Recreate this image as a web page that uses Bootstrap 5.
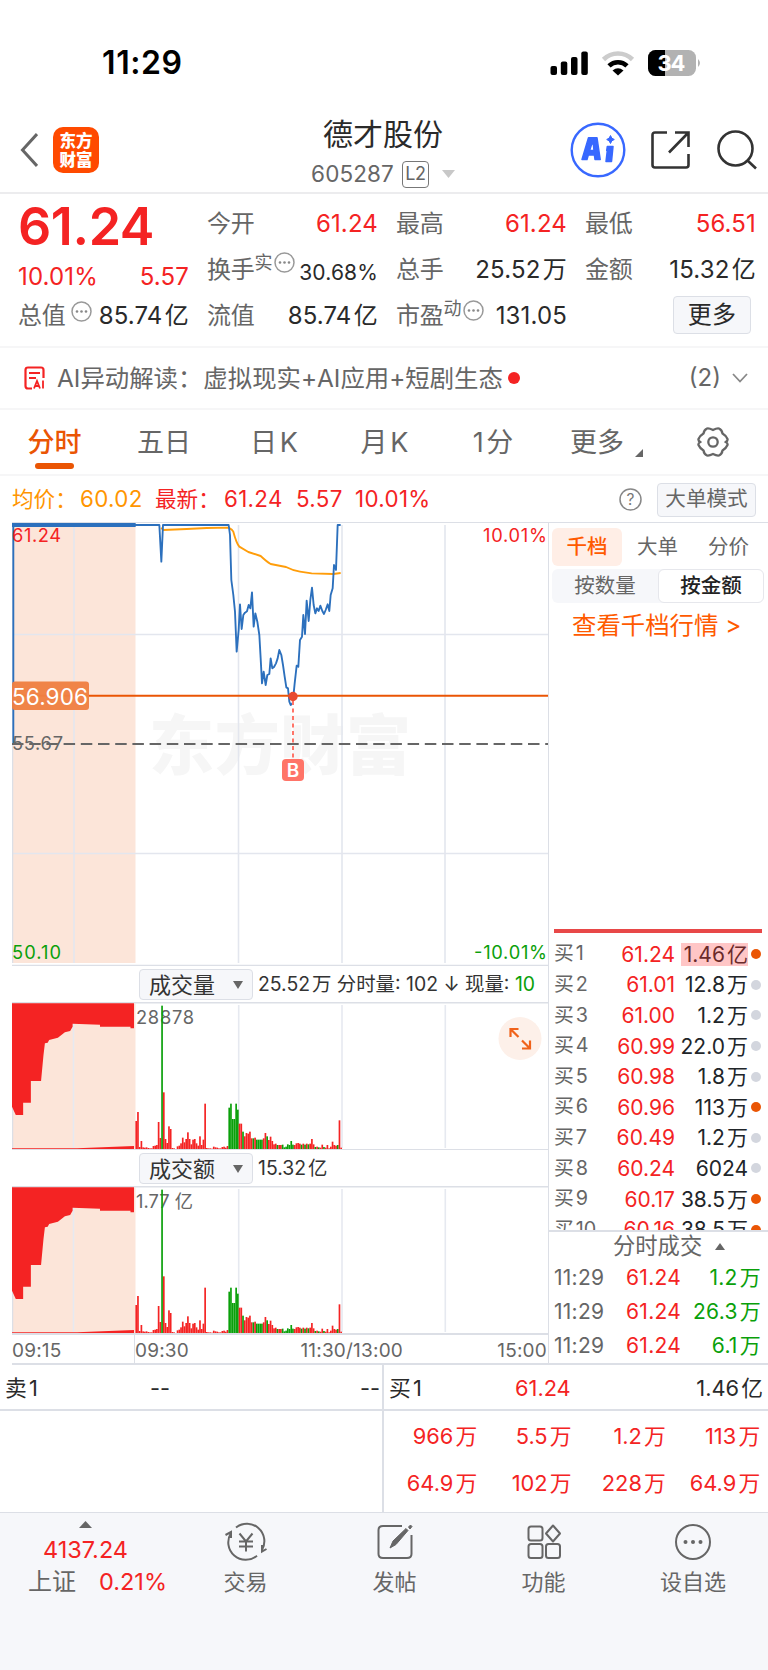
<!DOCTYPE html>
<html lang="zh-CN">
<head>
<meta charset="utf-8">
<meta name="viewport" content="width=device-width, initial-scale=1">
<title>德才股份 605287</title>
<link href="https://cdn.jsdelivr.net/npm/bootstrap@5.3.0/dist/css/bootstrap.min.css" rel="stylesheet">
<style>
:root{--up:#f42323;--dn:#0aa00a;--or:#ea5504;--ink:#2a2a2a;--g:#666;--ln:#dcdfe6}
body{font-family:Inter,"Noto Sans CJK SC",sans-serif;color:var(--ink);line-height:1;width:768px;height:1670px;overflow:hidden;background:#fff;white-space:nowrap}
svg{display:block;flex:none}
svg text{font-family:Inter,"Noto Sans CJK SC",sans-serif}
.up{color:var(--up)}.dn{color:var(--dn)}.gy{color:var(--g)}
u{text-decoration:none;margin-left:.1em}
.status{height:125px;padding:0 68px 0 102px}
.status .clock{font-size:32px;font-weight:600;letter-spacing:.6px;color:#000}
.head{height:69px;border-bottom:2px solid #ececee;position:relative;padding:0 11px 0 20px}
.brand{width:46px;height:46px;border-radius:10px;background:#ff4a00;color:#fff;font:900 16.5px/18.5px "Noto Sans CJK SC",sans-serif;margin-left:15px}
.title-box{position:absolute;left:223px;width:320px;top:-6px}
.title-box .nm{font-size:30px;height:31px;line-height:31px}
.title-box .cd{font-size:22.5px;letter-spacing:.1px;height:28px;margin-top:10px}
.lv{border:1.5px solid #777;border-radius:4px;width:27px;height:27px;font-size:18px;letter-spacing:-.5px}
.quote{height:154px;border-bottom:2px solid #f6f6f7;padding:0 12px 0 18px}
.quote-grid{display:grid;grid-template-columns:repeat(4,171px);column-gap:18px;grid-template-rows:46px 46px 46px;padding-top:7px}
.cell{font-size:24px;letter-spacing:.15px}
.cell>span:first-child:not(.up){color:var(--g);letter-spacing:-.3px}
.cell>.last-price{font-size:52px;font-weight:600;letter-spacing:-.4px;padding-top:6px}
.chip{background:#f6f7fa;border:1.5px solid var(--ln);border-radius:4px}
.sup{font-size:18px;color:var(--g)}
.news{height:62px;border-bottom:2px solid #f6f6f7;padding:0 20px 0 24px;font-size:24.4px;color:var(--g)}
.tabs{height:66px;border-bottom:2px solid #f6f6f7;display:grid;grid-template-columns:109px 110px 110px 111px 106px 112px 110px;font-size:27px;color:#666}
.tabs>div{display:flex;align-items:center;justify-content:center;position:relative}
.tabs .on{color:var(--or);font-weight:500}
.tabs .on::after{content:"";position:absolute;width:39px;height:6px;border-radius:3px;background:var(--or);bottom:5px;left:35px}
.avg{height:46px;padding:1px 12px 0;font-size:21.6px}
.avg .num{font-size:22.3px;letter-spacing:.35px}
.main{display:grid;grid-template-columns:537px 219px;margin-left:12px;height:843px;border-bottom:2px solid var(--ln);border-top:1px solid var(--ln)}
.main>.charts{border-right:1.5px solid var(--ln);margin-top:-1px}
.vhead{height:36px;font-size:19.4px;color:#333;padding:1px 0 0 127px}
.vhead .chip{width:114px;height:31px;font-size:22px;color:#333;padding:0 9px;margin-right:5px}
.axis{height:31px;font-size:19px;letter-spacing:.2px;color:var(--g);display:grid;grid-template-columns:123px 150px 122px 140px;border-top:1.5px solid var(--ln)}
.axis>div{display:flex;align-items:center}
.side{padding-left:3px;font-size:20.5px}
.side .pick{height:43px;padding-top:5px}
.pick>div{height:38px;display:flex;align-items:center;justify-content:center}
.seg{height:34px;width:212px;background:#f6f7fa;border-radius:6px;margin-top:3px}
.seg>div{display:flex;align-items:center;justify-content:center}
.seg .cur{background:#fff;border:1.5px solid #e6e7ec;border-radius:6px;color:#222;font-weight:500}
.more{height:44px;font-size:24.4px;color:#ff5a00;padding-left:20px}
.depth{margin-top:282px;border-top:4px solid #e84848;width:208px;margin-left:2px;height:301px;overflow:hidden;padding-top:6px}
.depth .rw{height:30.6px;display:grid;grid-template-columns:40px 81px 73px 14px;align-items:center;font-size:21px}
.depth .rw>div{text-align:right}
.depth .rw>div:first-child{text-align:left;color:var(--g);font-size:19.8px}
.depth i{display:block;width:10px;height:10px;border-radius:50%;background:#d3d6de;margin-left:3px}
.depth i.h{background:var(--or)}
.depth .big{background:#ffc6c6;color:#6a2a2a;height:23px;line-height:23px;width:67px;justify-self:end}
.deal-h{border-top:2px solid var(--ln);margin-left:-3px;height:30px;font-size:22.3px;color:var(--g);padding-left:64px}
.deal{height:34.2px;font-size:21px;letter-spacing:.25px;display:grid;grid-template-columns:52px 75px 80px;align-items:center;padding-left:2px}
.deal>div{text-align:right}.deal>div:first-child{text-align:left;color:var(--g)}
.book{height:148px;display:grid;grid-template-columns:384px 384px;border-bottom:1.5px solid var(--ln);font-size:21.8px}
.book .top1{height:46px;border-bottom:2px solid var(--ln);padding:3px 5px 0}
.book .l{border-right:2px solid var(--ln)}
.orders{display:grid;grid-template-columns:repeat(4,94.3px);grid-template-rows:47px 47px;margin-left:-1px;padding-top:2px;color:var(--up)}
.orders>div{display:flex;align-items:center;justify-content:flex-end}
.dock{height:158px;background:#f6f7fa;display:grid;grid-template-columns:171px 149px 149px 149px 150px;color:var(--g);font-size:22px;padding-top:8px}
.dock>.it{display:flex;flex-direction:column;align-items:center}
.dock .it>span{margin-top:6px;height:26px;line-height:26px}
</style>
</head>
<body>
<div class="status d-flex align-items-center justify-content-between">
  <span class="clock">11:29</span>
  <svg width="152" height="30" viewBox="548 47 152 30">
    <rect x="550.500" y="65" width="6.500" height="9" rx="2"/><rect x="560.800" y="60.500" width="6.500" height="13.500" rx="2"/><rect x="571" y="56" width="6.500" height="18" rx="2"/><rect x="581.300" y="50.500" width="6.500" height="23.500" rx="2"/>
    <g fill="none" stroke-width="4.600"><path d="M603.500 58.500a20.500 20.500 0 0 1 29 0" stroke="#ccc"/><path d="M609 64.800a13 13 0 0 1 18 0" stroke="#000"/></g><path d="M612.500 69.500q5.500-4.500 11 0L618 74.500z"/>
    <clipPath id="bt"><rect x="648" y="49" width="48" height="26" rx="7.500"/></clipPath>
    <g clip-path="url(#bt)"><rect x="648" y="49" width="48" height="26" fill="#b2b2b2"/><rect x="648" y="49" width="17" height="26"/></g>
    <path d="M698 58q4 4 0 8z" fill="#b2b2b2"/>
    <text x="657.500" y="70" font-size="22" font-weight="700" fill="#fff" textLength="28">34</text>
  </svg>
</div>
<header class="head d-flex align-items-center justify-content-between">
  <div class="d-flex align-items-center" style="margin-top:-18px">
    <svg width="18" height="34" fill="none" stroke="#666" stroke-width="3"><path d="M17 1 2.500 17 17 33"/></svg>
    <div class="brand d-flex align-items-center text-center justify-content-center"><span>东方<br>财富</span></div>
  </div>
  <div class="title-box">
    <div class="nm text-center">德才股份</div>
    <div class="cd gy d-flex align-items-center justify-content-center"><span>605287</span><span class="lv d-flex align-items-center justify-content-center ms-2">L2</span><svg style="margin-left:13px" width="13" height="8" fill="#c8c8c8"><path d="M0 0h13L6.500 8z"/></svg></div>
  </div>
  <div class="d-flex align-items-center" style="margin-top:-18px">
    <svg width="56" height="56" viewBox="0 0 56 56"><circle cx="28" cy="28" r="26.300" fill="none" stroke="#3868ff" stroke-width="2.400"/><g fill="#3868ff" stroke="#3868ff" stroke-width="1.500" stroke-linejoin="round" fill-rule="evenodd"><path d="M12 37.500 18.500 15.800H27L30.200 37.500H25L24.400 33H18.300L17 37.500ZM19.600 28.500H24L23.300 22H21.700ZM37.300 24.500H43L41.500 39.500H36L37.300 28.500H36.700Z"/></g><path d="M40.500 13.500q.7 3.200 3.800 4-3.100.8-3.800 4-.8-3.200-3.800-4 3-.8 3.800-4z" fill="#3868ff" stroke="#3868ff"/></svg>
    <svg style="margin-left:25px" width="40" height="38" fill="none" stroke="#333" stroke-width="2.600"><path d="M16 1.500H4Q1.500 1.500 1.500 4V34Q1.500 36.500 4 36.500H35Q37.500 36.500 37.500 34V23M24 1.500H37.500V16M37 2 18 21.500"/></svg>
    <svg style="margin-left:26px" width="40" height="40" fill="none" stroke="#333" stroke-width="2.600"><circle cx="18.500" cy="18.500" r="17"/><path d="M30 30 39 38.500"/></svg>
  </div>
</header>
<section class="quote">
  <div class="quote-grid">
    <div class="cell d-flex align-items-center"><span class="last-price up">61.24</span></div>
    <div class="cell d-flex align-items-center justify-content-between"><span>今开</span><span class="up">61.24</span></div>
    <div class="cell d-flex align-items-center justify-content-between"><span>最高</span><span class="up">61.24</span></div>
    <div class="cell d-flex align-items-center justify-content-between"><span>最低</span><span class="up">56.51</span></div>
    <div class="cell d-flex align-items-center justify-content-between" style="padding-top:13px"><span class="up">10.01%</span><span class="up">5.57</span></div>
    <div class="cell d-flex align-items-center justify-content-between"><span class="d-flex">换手<b class="sup fw-normal" style="margin-top:-4px">实</b><svg style="margin:-6px 0 0 2px" width="21" height="21"><use href="#dots"/></svg></span><span class="pt-1" style="font-size:21px">30.68%</span></div>
    <div class="cell d-flex align-items-center justify-content-between"><span>总手</span><span>25.52<u>万</u></span></div>
    <div class="cell d-flex align-items-center justify-content-between"><span>金额</span><span>15.32<u>亿</u></span></div>
    <div class="cell d-flex align-items-center justify-content-between"><span class="d-flex">总值<svg style="margin:-3px 0 0 6px" width="21" height="21"><use href="#dots"/></svg></span><span>85.74<u>亿</u></span></div>
    <div class="cell d-flex align-items-center justify-content-between"><span>流值</span><span>85.74<u>亿</u></span></div>
    <div class="cell d-flex align-items-center justify-content-between"><span class="d-flex">市盈<b class="sup fw-normal" style="margin-top:-4px">动</b><svg style="margin:-4px 0 0 2px" width="21" height="21"><use href="#dots"/></svg></span><span>131.05</span></div>
    <div class="cell d-flex align-items-center justify-content-end"><div class="chip d-flex align-items-center justify-content-center" style="width:78px;height:38px;margin:-3px 5px 0 0">更多</div></div>
  </div>
</section>
<svg width="0" height="0" class="position-absolute"><symbol id="dots" viewBox="0 0 21 21"><circle cx="10.500" cy="10.500" r="9.500" fill="none" stroke="#999" stroke-width="1.500"/><g fill="#888"><circle cx="6" cy="10.500" r="1.300"/><circle cx="10.500" cy="10.500" r="1.300"/><circle cx="15" cy="10.500" r="1.300"/></g></symbol></svg>
<section class="news d-flex align-items-center">
  <svg width="21" height="24" viewBox="0 0 21 24" fill="none" stroke="#f42323" stroke-width="2.200"><path d="M8 22.500H4Q1.500 22.500 1.500 20V4Q1.500 1.500 4 1.500H17Q19.500 1.500 19.500 4V12M5 7h11M5 12h7"/><path d="M10 22.500 13 15l3 7.500M11 20h4M19 14.500v8" stroke-width="1.800"/></svg>
  <span style="margin-left:12px">AI异动解读：</span><span style="margin-left:1px">虚拟现实+AI应用+短剧生态</span>
  <svg style="margin-left:5px" width="12" height="12"><circle cx="6" cy="6" r="6" fill="#f42323"/></svg>
  <span class="ms-auto" style="font-size:24px">(2)</span><svg style="margin-left:11px" width="16" height="10" fill="none" stroke="#888" stroke-width="1.800"><path d="M1 1 8 8.500 15 1"/></svg>
</section>
<nav class="tabs">
  <div class="on">分时</div><div>五日</div><div>日<u>K</u></div><div>月<u>K</u></div><div>1<u>分</u></div><div style="padding-right:10px">更多<svg class="position-absolute" style="right:15px;top:39px" width="8" height="8" fill="#666"><path d="M8 0V8H0z"/></svg></div>
  <div><svg width="32" height="30" viewBox="-16 -15 32 30" fill="none" stroke="#666" stroke-width="2.300" stroke-linejoin="round"><circle r="4.700"/><path d="M-6-13.500Q-4-14 0-12Q4-14 6-13.500Q9-12 9.500-8.500Q13-6.500 14.500-3Q15-1 12.500 0Q15 1 14.500 3Q13 6.500 9.500 8.500Q9 12 6 13.500Q4 14 0 12Q-4 14-6 13.500Q-9 12-9.500 8.500Q-13 6.500-14.500 3Q-15 1-12.500 0Q-15-1-14.500-3Q-13-6.500-9.500-8.500Q-9-12-6-13.500Z"/></svg></div>
</nav>
<section class="avg d-flex align-items-center">
  <span class="d-flex align-items-center" style="color:#ff9500;width:143px"><span style="width:68px">均价：</span><span class="num">60.02</span></span>
  <span class="up d-flex align-items-center" style="width:141px"><span style="width:69px">最新：</span><span class="num">61.24</span></span><span class="up num" style="width:59px">5.57</span><span class="up num">10.01%</span>
  <svg class="ms-auto" width="23" height="23"><circle cx="11.500" cy="11.500" r="10.500" fill="none" stroke="#888" stroke-width="1.500"/><text x="11.500" y="17" text-anchor="middle" font-size="15.500" fill="#777">?</text></svg>
  <div class="chip gy d-flex align-items-center justify-content-center" style="width:99px;height:34px;margin-left:15px;font-size:20.600px">大单模式</div>
</section>
<main class="main">
  <div class="charts">
    <svg width="536" height="444" viewBox="12 522 536 444">
      <path d="M12 525H135.500V963H12z" fill="#fce5d9"/>
      <text x="149" y="769" font-size="65" font-weight="900" fill="#f6f6f6" textLength="262">东方财富</text>
      <g stroke="#e3e6ee" stroke-width="1.600"><path d="M12 634.500H548M12 853.500H548M74 525V963M238.500 525V963M342 525V963M445 525V963"/><path d="M12.500 525V963M12 965.500H548" stroke="#dcdfe6"/></g>
      <g transform="translate(0 515) scale(.33333)" fill="none" stroke-width="5.600" stroke-linejoin="round">
        <path stroke="#ff9d0a" d="M484 38 489 45 560 42 620 39 686 38Q697 44 700 50 709 84 718 95L745 111 782 123Q800 140 812 147L858 156Q880 167 900 170L935 175 1000 177 1022 174"/>
        <path stroke="#2c70bd" d="M40 688V30H478L484 140 489 30H686L690 60 694 195 700 240 705 290 710 410 716 345 720 268 725 342 730 300 735 293 741 289 746 270 751 280 756 232 761 335 766 295 772 320 778 360 782 430 786 505 791 470 797 510 802 480 808 477 812 430 817 460 822 456 828 445 833 430 838 405 844 420 849 450 854 485 859 517 864 520 868 560 872 570 878 565 884 505 890 452 895 455 900 375 906 365 910 300 915 357 920 257 926 318 931 255 936 218 941 270 946 295 951 280 956 288 961 272 967 288 972 297 977 285 983 268 988 288 992 240 998 220 1002 150 1008 165 1013 30H1022"/>
        <path stroke="#2c70bd" stroke-width="12" d="M36 30H407"/>
      </g>
      <path d="M12 744H548" stroke="#666" stroke-width="2" stroke-dasharray="11.500 5.700"/>
      <path d="M12 695.700H548" stroke="#ea5504" stroke-width="2"/>
      <rect x="12" y="681.500" width="77" height="28.500" rx="3" fill="#f08043" fill-opacity=".97"/>
      <text x="12" y="704.500" font-size="22.500" fill="#fff" textLength="76">56.906</text>
      <path d="M293 701V759" stroke="#ff7468" stroke-width="2" stroke-dasharray="4 3.500"/>
      <circle cx="293" cy="696.500" r="4.700" fill="#e84a30"/>
      <rect x="282" y="759" width="22" height="22" rx="4" fill="#ff7468"/>
      <text x="293" y="777" text-anchor="middle" font-size="19" font-weight="600" fill="#fff">B</text>
      <g font-size="18.300"><text x="12" y="541.500" fill="#f42323" textLength="49">61.24</text><text x="483" y="541.500" fill="#f42323" textLength="64">10.01%</text><text x="12" y="750" fill="#666" textLength="51">55.67</text><text x="12" y="958.500" fill="#0aa00a" textLength="49">50.10</text><text x="474" y="958.500" textLength="73" fill="#0aa00a">-10.01%</text></g>
    </svg>
    <div class="vhead d-flex align-items-center"><div class="chip d-flex align-items-center justify-content-between">成交量<svg width="10" height="8" fill="#666"><path d="M0 0H10L5 8z"/></svg></div><span>25.52<u>万</u> 分时量: 102 ↓ 现量: <span class="dn">10</span></span></div>
    <svg width="536" height="148" viewBox="12 1002 536 148">
      <defs><g id="turnover">
        <path d="M12 1003.500H135.500V1149H12z" fill="#fce5d9"/>
        <path d="M12 1002.700H548M12 1149.700H548M12.500 1003V1150" stroke="#dcdfe6" stroke-width="1.500"/>
        <path d="M73.500 1005V1148M238.700 1005V1148M342 1005V1148M445.300 1005V1148" stroke="#e6e9f0" stroke-width="1.600"/>
        <g transform="translate(0 930) scale(.35077 .33333)"><path fill="#f42323" d="M34 220H382V295H372V290H285V284L207 281V290L200 303 185 307 165 323 140 330 136 338 128 340 124 375 117 453H88V518H66V555H45L34 530ZM34 655H220L382 648V657H34Z"/><g id="bars"></g></g>
      </g></defs>
      <text x="136" y="1024" font-size="18.300" fill="#666" textLength="58">28878</text>
      <use href="#turnover"/>
      <circle cx="520" cy="1038.500" r="21.500" fill="#fdf0e9"/>
      <path d="M510.500 1037V1029H518.500M511 1029.500 518.500 1037M530 1040.500V1048.500H522M529.500 1048 522 1040.500" fill="none" stroke="#f0621a" stroke-width="2.200"/>
    </svg>
    <div class="vhead d-flex align-items-center"><div class="chip d-flex align-items-center justify-content-between">成交额<svg width="10" height="8" fill="#666"><path d="M0 0H10L5 8z"/></svg></div><span>15.32<u>亿</u></span></div>
    <svg width="536" height="148" viewBox="12 1002 536 148">
      <text x="136" y="1024" font-size="18.300" fill="#666" textLength="57">1.77 亿</text>
      <use href="#turnover"/>
    </svg>
    <div class="axis"><div style="border-right:1px solid var(--ln)">09:15</div><div>09:30</div><div class="justify-content-end pe-1" style="margin-left:-20px">11:30/13:00</div><div class="justify-content-end">15:00</div></div>
  </div>
  <aside class="side gy">
    <div class="pick d-flex"><div style="width:70px;background:#ffeee6;border-radius:6px;color:#ff5a00;font-weight:500">千档</div><div style="width:71px">大单</div><div style="width:71px">分价</div></div>
    <div class="seg d-flex"><div style="width:106px">按数量</div><div class="cur" style="width:106px">按金额</div></div>
    <div class="more d-flex align-items-center">查看千档行情 &gt;</div>
    <div class="depth">
      <div class="rw"><div>买<u>1</u></div><div class="up">61.24</div><div class="big">1.46<u>亿</u></div><i class="h"></i></div>
      <div class="rw"><div>买<u>2</u></div><div class="up">61.01</div><div class="text-dark">12.8<u>万</u></div><i></i></div>
      <div class="rw"><div>买<u>3</u></div><div class="up">61.00</div><div class="text-dark">1.2<u>万</u></div><i></i></div>
      <div class="rw"><div>买<u>4</u></div><div class="up">60.99</div><div class="text-dark">22.0<u>万</u></div><i></i></div>
      <div class="rw"><div>买<u>5</u></div><div class="up">60.98</div><div class="text-dark">1.8<u>万</u></div><i></i></div>
      <div class="rw"><div>买<u>6</u></div><div class="up">60.96</div><div class="text-dark">113<u>万</u></div><i class="h"></i></div>
      <div class="rw"><div>买<u>7</u></div><div class="up">60.49</div><div class="text-dark">1.2<u>万</u></div><i></i></div>
      <div class="rw"><div>买<u>8</u></div><div class="up">60.24</div><div class="text-dark">6024</div><i></i></div>
      <div class="rw"><div>买<u>9</u></div><div class="up">60.17</div><div class="text-dark">38.5<u>万</u></div><i class="h"></i></div>
      <div class="rw"><div>买<u>10</u></div><div class="up">60.16</div><div class="text-dark">38.5<u>万</u></div><i class="h"></i></div>
    </div>
    <div class="deal-h d-flex align-items-center">分时成交<svg style="margin-left:13px" width="10" height="7" fill="#666"><path d="M0 7H10L5 0z"/></svg></div>
    <div class="deal"><div>11:29</div><div class="up">61.24</div><div class="dn">1.2<u>万</u></div></div>
    <div class="deal"><div>11:29</div><div class="up">61.24</div><div class="dn">26.3<u>万</u></div></div>
    <div class="deal"><div>11:29</div><div class="up">61.24</div><div class="dn">6.1<u>万</u></div></div>
  </aside>
</main>
<section class="book">
  <div class="l"><div class="top1 d-flex align-items-center"><span style="width:145px">卖<u>1</u></span><span>--</span><span class="ms-auto" style="margin-right:-3px">--</span></div></div>
  <div><div class="top1 d-flex align-items-center"><span style="width:126px">买<u>1</u></span><span class="up">61.24</span><span class="ms-auto">1.46<u>亿</u></span></div>
    <div class="orders"><div>966<u>万</u></div><div>5.5<u>万</u></div><div>1.2<u>万</u></div><div>113<u>万</u></div><div>64.9<u>万</u></div><div>102<u>万</u></div><div>228<u>万</u></div><div>64.9<u>万</u></div></div></div>
</section>
<footer class="dock">
  <div class="it"><svg width="13" height="7" fill="#666"><path d="M0 7H13L6.500 0z"/></svg><div class="up" style="font-size:23.500px;margin-top:9px;height:26px;line-height:26px">4137.24</div><div style="margin-top:6px;font-size:24px;height:26px;line-height:26px;padding-left:28px" class="align-self-start">上证<span class="up" style="margin-left:23px;font-size:23.500px">0.21%</span></div></div>
  <div class="it"><svg width="42" height="42" viewBox="-21 -21 42 42" fill="none" stroke="#666" stroke-width="2"><path d="M-10-14.500A17.500 17.500 0 0 1 16 8M11 13.800A17.500 17.500 0 0 1-15-9M-20.500-7 -15-10V-4M20.500 7 16 9.500V3M-6.500-8.500 0-.5 6.500-8.500M0-.5V9.500M-7-.5H7M-7 4.500H7"/></svg><span>交易</span></div>
  <div class="it"><svg width="42" height="42" viewBox="-21 -21 42 42" fill="none" stroke="#666" stroke-width="2"><path d="M7-16H-12Q-16.500-16-16.500-12V12Q-16.500 16-12 16H12Q16.500 16 16.500 12V-7"/><path d="M-5 6-2-1 11-13.500 13-11.500 1 2.500ZM13.500-15 15.500-17 17-15.500 15-13Z" fill="#666" stroke-width="1"/></svg><span>发帖</span></div>
  <div class="it"><svg width="42" height="42" viewBox="-21 -21 42 42" fill="none" stroke="#666" stroke-width="2"><rect x="-15.500" y="-15.500" width="14" height="14" rx="2.500"/><rect x="-15.500" y="2" width="14" height="14" rx="2.500"/><rect x="2" y="2" width="14" height="14" rx="2.500"/><path d="M9-16.500 16-8.500 9-.5 2-8.500Z" stroke-linejoin="round"/></svg><span>功能</span></div>
  <div class="it"><svg width="42" height="42" viewBox="-21 -21 42 42" fill="none" stroke="#666" stroke-width="2"><circle r="17"/><g fill="#666" stroke="none"><circle cx="-7.500" r="2"/><circle r="2"/><circle cx="7.500" r="2"/></g></svg><span>设自选</span></div>
</footer>
<script src="https://cdn.jsdelivr.net/npm/bootstrap@5.3.0/dist/js/bootstrap.bundle.min.js"></script>
<script>
// Per-minute turnover; negative values are down minutes (green).
const minutes=[84,111,6,24,5,4,5,3,2,2,9,10,12,81,33,-430,170,30,18,68,60,3,2,0,8,10,17,34,20,30,50,30,14,28,30,17,10,38,12,28,136,3,2,2,1,7,5,4,2,2,6,7,4,9,-124,-136,-90,-90,-136,-118,76,76,-52,38,48,46,52,32,-32,34,-28,-28,-28,-28,32,48,-38,27,37,24,14,16,-12,12,12,-13,-5,-7,-14,-12,-24,-13,12,17,18,16,-13,16,-13,16,-14,16,30,14,-6,7,-5,4,13,-6,4,12,2,7,22,12,10,-12,86,4];
document.getElementById('bars').innerHTML=minutes.map((v,i)=>`<rect x="${(386+i*4.91).toFixed(1)}" y="${657-Math.abs(v)}" width="4.8" height="${Math.abs(v)}" fill="${v<0?'#0aa00a':'#f42323'}"/>`).join('');
</script>
</body>
</html>
